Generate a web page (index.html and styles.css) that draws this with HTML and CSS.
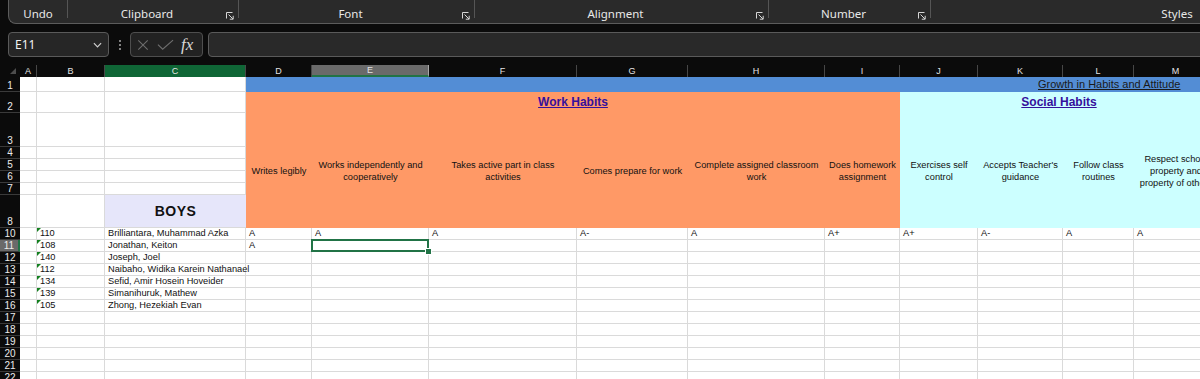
FILE: index.html
```html
<!DOCTYPE html>
<html>
<head>
    <title>Report Card - Growth in Habits and Attitude</title>
    <link rel="stylesheet" href="styles.css">
</head>
<body>
    <!-- ribbon group labels -->
    <div class="ribbon">
        <div class="grp g-undo"><span class="lbl">Undo</span></div>
        <div class="sep"></div>
        <div class="grp g-clip"><span class="lbl">Clipboard</span><svg class="launch" viewBox="0 0 8 8"><path d="M0.5 6.5V0.5H6.5M2.5 2.5L7 7M3.8 7.2H7.2V3.8"/></svg></div>
        <div class="sep"></div>
        <div class="grp g-font"><span class="lbl">Font</span><svg class="launch" viewBox="0 0 8 8"><path d="M0.5 6.5V0.5H6.5M2.5 2.5L7 7M3.8 7.2H7.2V3.8"/></svg></div>
        <div class="sep"></div>
        <div class="grp g-align"><span class="lbl">Alignment</span><svg class="launch" viewBox="0 0 8 8"><path d="M0.5 6.5V0.5H6.5M2.5 2.5L7 7M3.8 7.2H7.2V3.8"/></svg></div>
        <div class="sep"></div>
        <div class="grp g-num"><span class="lbl">Number</span><svg class="launch" viewBox="0 0 8 8"><path d="M0.5 6.5V0.5H6.5M2.5 2.5L7 7M3.8 7.2H7.2V3.8"/></svg></div>
        <div class="sep"></div>
        <div class="grp g-styles"><span class="lbl">Styles</span></div>
    </div>

    <!-- name box + formula bar -->
    <div class="fbar">
        <div class="namebox">
            <span>E11</span>
            <svg class="chev" viewBox="0 0 10 6"><path d="M1 1L5 5L9 1"/></svg>
        </div>
        <div class="grip"><svg viewBox="0 0 4 12"><circle cx="2" cy="2" r="1"/><circle cx="2" cy="6" r="1"/><circle cx="2" cy="10" r="1"/></svg></div>
        <div class="fbtns">
            <svg class="ico" viewBox="0 0 14 14"><path d="M1.5 1.5L12.5 12.5M12.5 1.5L1.5 12.5"/></svg>
            <svg class="ico" viewBox="0 0 18 12"><path d="M1 5.5L6 10.5L17 0.8"/></svg>
            <span class="fx">fx</span>
        </div>
        <div class="finput"></div>
    </div>

    <div class="sheet">
        <!-- column headers -->
        <div class="ch corner"></div><div class="ch">A</div><div class="ch">B</div><div class="ch col-hl">C</div><div class="ch">D</div><div class="ch col-sel">E</div><div class="ch">F</div><div class="ch">G</div><div class="ch">H</div><div class="ch">I</div><div class="ch">J</div><div class="ch">K</div><div class="ch">L</div><div class="ch">M</div><div class="ch">N</div>

        <!-- row 1 -->
        <div class="rh">1</div><div class="c"></div><div class="c"></div><div class="c"></div>
        <div class="band"><span>Growth in Habits and Attitude</span></div>

        <!-- row 2 -->
        <div class="rh">2</div><div class="c"></div><div class="c"></div><div class="c"></div>
        <div class="title work">Work Habits</div>
        <div class="title social">Social Habits</div>
        <div class="soc"></div>

        <!-- row 3 (headers merged through row 8) -->
        <div class="rh">3</div><div class="c"></div><div class="c"></div><div class="c"></div>
        <div class="hd work">Writes legibly</div>
        <div class="hd work">Works independently and cooperatively</div>
        <div class="hd work roomy">Takes active part in class activities</div>
        <div class="hd work">Comes prepare for work</div>
        <div class="hd work">Complete assigned classroom work</div>
        <div class="hd work">Does homework assignment</div>
        <div class="hd social">Exercises self control</div>
        <div class="hd social">Accepts Teacher's guidance</div>
        <div class="hd social">Follow class routines</div>
        <div class="hd social">Respect school property and property of others</div>
        <div class="hd social"></div>

        <div class="rh">4</div><div class="c"></div><div class="c"></div><div class="c"></div>
        <div class="rh">5</div><div class="c"></div><div class="c"></div><div class="c"></div>
        <div class="rh">6</div><div class="c"></div><div class="c"></div><div class="c"></div>
        <div class="rh">7</div><div class="c"></div><div class="c"></div><div class="c"></div>
        <div class="rh">8</div><div class="c"></div><div class="c"></div><div class="boys">BOYS</div>

        <!-- students -->
        <div class="rh">10</div><div class="c"></div><div class="c id">110</div><div class="c">Brilliantara, Muhammad Azka</div><div class="c">A</div><div class="c">A</div><div class="c">A</div><div class="c">A-</div><div class="c">A</div><div class="c">A+</div><div class="c">A+</div><div class="c">A-</div><div class="c">A</div><div class="c">A</div><div class="c"></div>
        <div class="rh on">11</div><div class="c"></div><div class="c id">108</div><div class="c">Jonathan, Keiton</div><div class="c">A</div><div class="c sel"></div><div class="c"></div><div class="c"></div><div class="c"></div><div class="c"></div><div class="c"></div><div class="c"></div><div class="c"></div><div class="c"></div><div class="c"></div>
        <div class="rh">12</div><div class="c"></div><div class="c id">140</div><div class="c">Joseph, Joel</div><div class="c"></div><div class="c"></div><div class="c"></div><div class="c"></div><div class="c"></div><div class="c"></div><div class="c"></div><div class="c"></div><div class="c"></div><div class="c"></div><div class="c"></div>
        <div class="rh">13</div><div class="c"></div><div class="c id">112</div><div class="c">Naibaho, Widika Karein Nathanael</div><div class="c"></div><div class="c"></div><div class="c"></div><div class="c"></div><div class="c"></div><div class="c"></div><div class="c"></div><div class="c"></div><div class="c"></div><div class="c"></div><div class="c"></div>
        <div class="rh">14</div><div class="c"></div><div class="c id">134</div><div class="c">Sefid, Amir Hosein Hoveider</div><div class="c"></div><div class="c"></div><div class="c"></div><div class="c"></div><div class="c"></div><div class="c"></div><div class="c"></div><div class="c"></div><div class="c"></div><div class="c"></div><div class="c"></div>
        <div class="rh">15</div><div class="c"></div><div class="c id">139</div><div class="c">Simanihuruk, Mathew</div><div class="c"></div><div class="c"></div><div class="c"></div><div class="c"></div><div class="c"></div><div class="c"></div><div class="c"></div><div class="c"></div><div class="c"></div><div class="c"></div><div class="c"></div>
        <div class="rh">16</div><div class="c"></div><div class="c id">105</div><div class="c">Zhong, Hezekiah Evan</div><div class="c"></div><div class="c"></div><div class="c"></div><div class="c"></div><div class="c"></div><div class="c"></div><div class="c"></div><div class="c"></div><div class="c"></div><div class="c"></div><div class="c"></div>

        <!-- empty rows -->
        <div class="rh">17</div><div class="c"></div><div class="c"></div><div class="c"></div><div class="c"></div><div class="c"></div><div class="c"></div><div class="c"></div><div class="c"></div><div class="c"></div><div class="c"></div><div class="c"></div><div class="c"></div><div class="c"></div><div class="c"></div>
        <div class="rh">18</div><div class="c"></div><div class="c"></div><div class="c"></div><div class="c"></div><div class="c"></div><div class="c"></div><div class="c"></div><div class="c"></div><div class="c"></div><div class="c"></div><div class="c"></div><div class="c"></div><div class="c"></div><div class="c"></div>
        <div class="rh">19</div><div class="c"></div><div class="c"></div><div class="c"></div><div class="c"></div><div class="c"></div><div class="c"></div><div class="c"></div><div class="c"></div><div class="c"></div><div class="c"></div><div class="c"></div><div class="c"></div><div class="c"></div><div class="c"></div>
        <div class="rh">20</div><div class="c"></div><div class="c"></div><div class="c"></div><div class="c"></div><div class="c"></div><div class="c"></div><div class="c"></div><div class="c"></div><div class="c"></div><div class="c"></div><div class="c"></div><div class="c"></div><div class="c"></div><div class="c"></div>
        <div class="rh">21</div><div class="c"></div><div class="c"></div><div class="c"></div><div class="c"></div><div class="c"></div><div class="c"></div><div class="c"></div><div class="c"></div><div class="c"></div><div class="c"></div><div class="c"></div><div class="c"></div><div class="c"></div><div class="c"></div>
        <div class="rh">22</div><div class="c"></div><div class="c"></div><div class="c"></div><div class="c"></div><div class="c"></div><div class="c"></div><div class="c"></div><div class="c"></div><div class="c"></div><div class="c"></div><div class="c"></div><div class="c"></div><div class="c"></div><div class="c"></div>
    </div>
</body>
</html>
```

FILE: styles.css
```css
body {
    margin: 0;
    width: 1200px;
    height: 379px;
    overflow: hidden;
    background-color: #0b0b0b;
    font-family: "Liberation Sans", Arial, sans-serif;
}

/* ---- ribbon ---- */
.ribbon {
    display: flex;
    height: 23px;
    margin-left: 8px;
    background-color: #2a2a2a;
    border-left: 1px solid #5c5c5c;
    border-bottom: 1px solid #5c5c5c;
    border-bottom-left-radius: 8px;
    overflow: hidden;
    font-family: "Noto Sans", "Open Sans", sans-serif;
    font-size: 11.5px;
    color: #e8e8e8;
}
.grp {
    display: flex;
    align-items: flex-start;
    flex-shrink: 0;
    padding-top: 6px;
}
.lbl {
    flex: 1;
    text-align: center;
    line-height: 16px;
}
.launch {
    width: 8px;
    height: 8px;
    margin: 6px 4px 0 0;
    fill: none;
    stroke: #d6d6d6;
    stroke-width: 1;
}
.sep {
    flex-shrink: 0;
    width: 1px;
    height: 18px;
    background-color: #555;
}
.g-undo { width: 58px; }
.g-clip { width: 170px; }
.g-font { width: 235px; }
.g-align { width: 293px; }
.g-num { width: 161px; }
.g-styles { width: 492px; }

/* ---- formula bar ---- */
.fbar {
    display: flex;
    align-items: center;
    height: 25px;
    margin-top: 8px;
    padding-left: 8px;
}
.namebox {
    display: flex;
    align-items: center;
    justify-content: space-between;
    box-sizing: border-box;
    width: 101px;
    height: 25px;
    padding: 0 6px 0 6px;
    background-color: #262626;
    border: 1px solid #5a5a5a;
    border-radius: 4px;
    font-family: "Noto Sans", "Open Sans", sans-serif;
    font-size: 12px;
    color: #f2f2f2;
}
.chev {
    width: 9px;
    height: 6px;
    fill: none;
    stroke: #d0d0d0;
    stroke-width: 1.3;
}
.grip {
    display: flex;
    justify-content: center;
    width: 21px;
}
.grip svg {
    width: 4px;
    height: 12px;
    fill: #a8a8a8;
}
.fbtns {
    display: flex;
    align-items: center;
    gap: 9px;
    box-sizing: border-box;
    width: 73px;
    height: 25px;
    padding-left: 6px;
    background-color: #222;
    border: 1px solid #4e4e4e;
    border-radius: 4px;
}
.ico {
    height: 12px;
    fill: none;
    stroke: #6e6e6e;
    stroke-width: 1.2;
}
.ico:first-child { width: 12px; }
.ico:nth-child(2) { width: 17px; margin-left: -1px; }
.fx {
    margin-left: -2px;
    font-family: "Liberation Serif", "DejaVu Serif", serif;
    font-style: italic;
    font-size: 17px;
    line-height: 20px;
    color: #d8d8d8;
}
.finput {
    flex: 1;
    box-sizing: border-box;
    height: 25px;
    margin-left: 5px;
    margin-right: -20px;
    background-color: #292929;
    border: 1px solid #5a5a5a;
    border-radius: 4px;
}

/* ---- sheet grid ---- */
.sheet {
    display: grid;
    grid-template-columns: 20px 17px 68px 141px 66px 117px 148px 111px 137px 75px 78px 85px 71px 84px 120px;
    grid-template-rows: 12px 15px 21px 34px 12px 12px 12px 12px 33px repeat(13, 12px);
    width: 1338px;
    margin-top: 8px;
    background-color: #fff;
    font-size: 9.25px;
    color: #111;
}
.sheet > div {
    box-sizing: border-box;
    min-width: 0;
}
.ch {
    background-color: #0b0b0b;
    border-right: 1px solid #474747;
    text-align: center;
    font-size: 9px;
    line-height: 12px;
    color: #e4e4e4;
}
.ch.corner {
    position: relative;
    border-right: none;
}
.ch.corner::after {
    content: "";
    position: absolute;
    right: 4px;
    bottom: 3px;
    border-left: 6px solid transparent;
    border-bottom: 6px solid #4d4d4d;
}
.ch.col-hl {
    background-color: #0f6636;
}
.ch.col-sel {
    background-color: #6a6a6a;
    border-right-color: #a8a8a8;
    border-bottom: 2px solid #217346;
    line-height: 11px;
}
.rh {
    display: flex;
    align-items: flex-end;
    justify-content: center;
    background-color: #0b0b0b;
    border-bottom: 1px solid #3a3a3a;
    font-size: 10px;
    line-height: 11px;
    color: #ececec;
}
.rh.on {
    background-color: #6a6a6a;
    border-right: 2px solid #217346;
}
.c {
    padding: 0 3px;
    border-right: 1px solid #dadada;
    border-bottom: 1px solid #dadada;
    line-height: 11px;
    white-space: nowrap;
}
.c.id {
    position: relative;
}
.c.id::before {
    content: "";
    position: absolute;
    left: 0;
    top: 0;
    border-top: 4px solid #13801f;
    border-right: 4px solid transparent;
}
.c.sel {
    position: relative;
    z-index: 2;
}
.c.sel::after {
    content: "";
    position: absolute;
    left: -1px;
    top: -1px;
    right: -1px;
    bottom: -1px;
    border: 2px solid #217346;
}
.c.sel::before {
    content: "";
    position: absolute;
    right: -3px;
    bottom: -3px;
    z-index: 1;
    width: 5px;
    height: 5px;
    background-color: #217346;
    outline: 1px solid #fff;
}

/* coloured header blocks */
.band {
    grid-column: span 11;
    padding-left: 792px;
    background-color: #538dd5;
    font-size: 11px;
    line-height: 15px;
    color: #1a1a1a;
    white-space: nowrap;
}
.band span {
    text-decoration: underline;
}
.title {
    text-align: center;
    font-size: 12px;
    font-weight: bold;
    line-height: 21px;
    color: #35109c;
    text-decoration: underline;
}
.title.work { grid-column: span 6; }
.title.social { grid-column: span 4; }
.work { background-color: #ff9966; }
.social, .soc { background-color: #ccffff; }
.hd {
    grid-row: span 6;
    display: flex;
    align-items: center;
    justify-content: center;
    padding: 0 2px;
    text-align: center;
    line-height: 12px;
}
.hd.roomy {
    padding: 0 12px;
}
.boys {
    display: flex;
    align-items: center;
    justify-content: center;
    background-color: #e6e6fa;
    border-bottom: 1px solid #dadada;
    font-size: 14px;
    font-weight: bold;
    letter-spacing: 0.5px;
    color: #111;
}
```
